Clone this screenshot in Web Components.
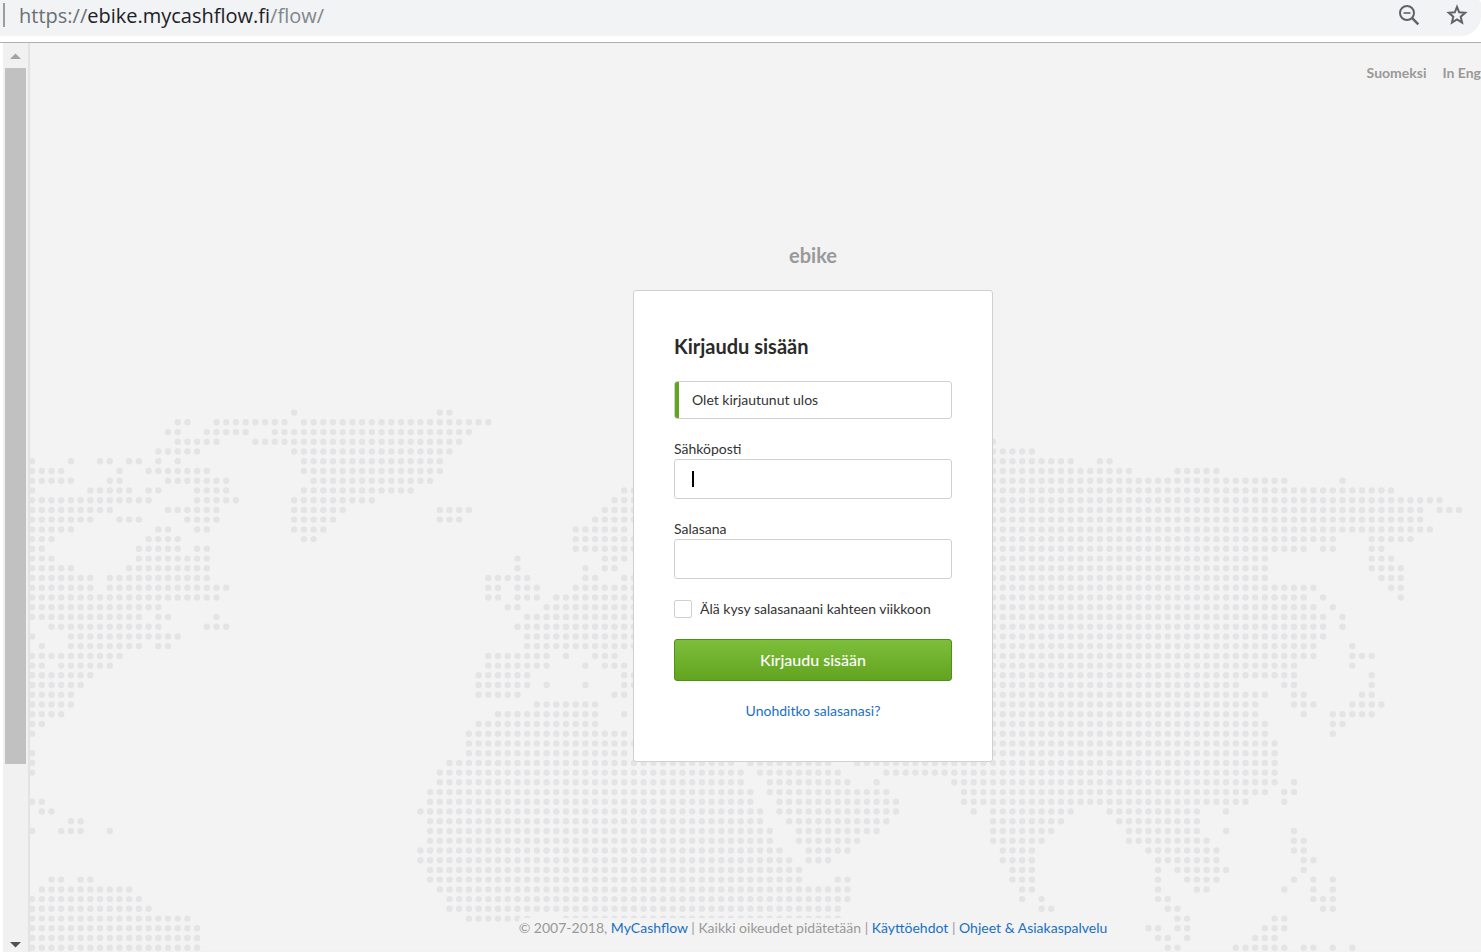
<!DOCTYPE html>
<html lang="fi">
<head>
<meta charset="utf-8">
<title>Kirjaudu sisään – MyCashflow</title>
<style>
  html, body { margin: 0; height: 100%; }
  body { background: #fff; font: 14px/20px Lato, "Liberation Sans", sans-serif; color: #333; overflow: hidden; }
</style>
</head>
<body>
<app-window></app-window>
<script>
class BaseElement extends HTMLElement {
  constructor() {
    super();
    this.attachShadow({ mode: "open" });
    this.shadowRoot.innerHTML = this.render();
  }
}

customElements.define("address-bar", class extends BaseElement {
  render() {
    return `<style>
      :host { display: block; background: #fff; padding-bottom: 6px; border-bottom: 1px solid #b0b0b0; }
      .pill { display: flex; align-items: center; height: 36px; box-sizing: border-box; padding: 0 12px 6px 3px;
              background: #f1f3f4; border-radius: 0 4px 20px 0; }
      .sep { width: 2px; height: 24px; background: #9b9da0; margin-right: 14px; }
      .url { flex: 1; padding-top: 2px; font: 20px/28px "Open Sans", "Noto Sans", sans-serif; color: #80868b; white-space: nowrap; }
      .scheme { color: #6b7075; }
      .host { color: #202124; }
      button { border: 0; background: none; padding: 0; margin-left: 24px; width: 24px; height: 24px; }
      svg { display: block; }
    </style>
    <div class="pill">
      <span class="sep"></span>
      <div class="url"><span class="scheme">https://</span><span class="host">ebike.mycashflow.fi</span>/flow/</div>
      <button type="button" aria-label="Zoom">
        <svg width="24" height="24" viewBox="0 0 24 24" fill="none" stroke="#5f6368" stroke-width="2">
          <circle cx="10" cy="10" r="7"/><path d="M15.200 15.200L21.300 21.300" stroke-width="2.500"/><path d="M6.500 10H13.500" stroke-width="1.600"/>
        </svg>
      </button>
      <button type="button" aria-label="Bookmark">
        <svg width="24" height="24" viewBox="0 0 24 24" fill="none" stroke="#5f6368" stroke-width="2">
          <path d="M12 3.900L14.200 9.300L20.200 9.800L15.700 13.700L17.100 19.700L12 16.500L6.900 19.700L8.300 13.700L3.800 9.800L9.800 9.300z"/>
        </svg>
      </button>
    </div>`;
  }
});

customElements.define("side-scrollbar", class extends BaseElement {
  render() {
    return `<style>
      :host { display: flex; flex-direction: column; align-items: center; box-sizing: border-box; width: 25px;
              margin-left: 3px; background: #f1f1f1; }
      .track { flex: 1; width: 21px; }
      .thumb { height: 81%; background: #c1c1c1; }
      svg { display: block; flex: none; }
    </style>
    <svg width="25" height="25" viewBox="0 0 25 25"><path d="M7 16L12.500 10.500L18 16z" fill="#a3a3a3"/></svg>
    <div class="track"><div class="thumb"></div></div>
    <svg width="25" height="25" viewBox="0 0 25 25"><path d="M7 15L12.500 20.500L18 15z" fill="#505050"/></svg>`;
  }
});

/* Dotted world map: one entry per grid row, listing the filled columns as ranges. */
const MAP_ROWS = [
  "27 42-43", "15-16 19-26 28-47", "14-15 18-22 25-45", "15-19 23-44 99", "13-17 27-43 99-103",
  "0 4 7-8 10-11 13 15 28-42 99-107 110-111", "0-3 9 12-18 28-42 99-113 118-122",
  "0-4 8-9 14-20 29-41 99-129 135", "0 6-10 12-13 17-20 28-39 61-140", "0-12 17-21 27-35 60-145",
  "0-8 14-19 27-32 42-45 59-143 145-147", "0-6 9-11 16-19 27-31 42-44 58-143",
  "0-4 13-14 17-18 27-30 56-61 99-144", "0-2 12-15 28-29 56-134 138-142",
  "0-1 11-15 17-18 56-131 133-134 138-139", "0-2 11-18 50 59-61 99-127 138-140",
  "0-4 10-18 50 57 59-60 99-127 138-141", "0-6 8-18 47-51 57-58 61-127 139-141",
  "0-6 8-20 47-48 50-52 56-132 140-141", "0-19 47-48 50-52 54-131 133 141",
  "0-13 49-50 53-132 134", "0-11 13-14 19 51-133 135", "2-13 18-20 50-133 135",
  "0 4-15 51-133", "1 4-11 13-14 51-132 136", "0-9 47-53 55 58-60 99-132 136-138",
  "0-1 3-8 47-53 57 59-61 99-130 136", "0-6 46-51 61-130 138", "0-5 46-51 53 57 61-124 129-130 138",
  "0-4 46-50 60-61 99-127 130-131 137-138", "0-4 52-58 99-126 130-132 136-139",
  "0-3 48-58 61 99-126 131 134-138", "0-1 46-58 99-127 134-135", "0 45-61 99-127 134",
  "45-128", "0 45-61 99-128", "0 43-72 74-82 85-128", "0 42-73 75-83 88-128",
  "42-73 76-84 87 95-128 130", "41-74 76-88 96-127 129-130", "0-1 41-74 77-89 96-125 129",
  "1-2 40-75 77-89 97 99-107 111-120 123", "4-5 41-75 78-88 99-106 112-120",
  "0 3-5 8 41-76 79-87 99-105 113-120 123 130", "41-76 79-85 99-104 113-121 130-131",
  "40-77 80-84 100-103 115-122 130-131", "40-78 80-82 100-103 116-122 131-132",
  "41-79 101-103 116 118-123 131", "2-3 5-6 41-79 83-84 101-103 116 119-122 130 132 134",
  "1-10 42-84 102-103 116 120-121 129 132 134", "0-11 43-84 102 104 116-117 132-134",
  "0-12 43-83 104-105 117-118 133-134", "0-16 45-51 55-83 118-119 128-129",
  "0-17 115-116 118-119 127-129", "0-17 116-117 119 126-128", "0-17 117-118 124-129 131-132 134 136"
];

customElements.define("dot-map", class extends BaseElement {
  render() {
    let d = "";
    MAP_ROWS.forEach((row, r) => {
      for (const range of row.split(" ")) {
        const [a, b = a] = range.split("-").map(Number);
        for (let c = a; c <= b; c++) d += `M${(4.1 + c * 9.707).toFixed(1)} ${(369.6 + r * 9.73).toFixed(1)}h0`;
      }
    });
    return `<style>
      :host { display: block; }
      svg { display: block; width: 100%; }
    </style>
    <svg viewBox="0 0 1453 909" aria-hidden="true"><path d="${d}" stroke="#e4e4e6" stroke-width="6.4" stroke-linecap="round"/></svg>`;
  }
});

customElements.define("language-nav", class extends BaseElement {
  render() {
    return `<style>
      :host { display: block; }
      nav { display: flex; justify-content: flex-end; gap: 16px; padding: 20px 117px 0 0; }
      a { color: #999; font-weight: 700; text-decoration: none; white-space: nowrap; }
    </style>
    <nav><a href="#fi">Suomeksi</a><a href="#en">In Eng</a></nav>`;
  }
});

customElements.define("status-message", class extends BaseElement {
  render() {
    return `<style>
      :host { display: block; box-sizing: border-box; height: 38px; border: 1px solid #d0d0d0; border-radius: 3px;
              overflow: hidden; margin-bottom: 20px; }
      p { margin: 0; border-left: 4px solid #62a420; padding: 8px 13px; }
    </style>
    <p role="status"><slot></slot></p>`;
  }
});

customElements.define("text-field", class extends HTMLElement {
  connectedCallback() {
    const type = this.getAttribute("type") || "text";
    this.attachShadow({ mode: "open" }).innerHTML = `<style>
      :host { display: block; margin-bottom: 20px; }
      label { display: block; }
      .box { position: relative; }
      input { display: block; box-sizing: border-box; width: 100%; height: 40px; border: 1px solid #d0d0d0;
              border-radius: 3px; padding: 0 17px; font: inherit; color: inherit; background: #fff; outline: none; }
      .caret { position: absolute; left: 18px; top: 12px; width: 2px; height: 16px; background: #000; }
    </style>
    <label for="field">${this.getAttribute("label")}</label>
    <div class="box"><input id="field" type="${type}">${this.hasAttribute("active") ? '<span class="caret"></span>' : ""}</div>`;
  }
});

customElements.define("check-field", class extends BaseElement {
  render() {
    return `<style>
      :host { display: block; margin-bottom: 20px; }
      label { display: flex; align-items: center; gap: 8px; white-space: nowrap; }
      input { appearance: none; flex: none; box-sizing: border-box; width: 18px; height: 18px; margin: 0;
              border: 1px solid #d0d0d0; border-radius: 2px; background: #fff; }
    </style>
    <label><input type="checkbox"><slot></slot></label>`;
  }
});

customElements.define("submit-button", class extends BaseElement {
  render() {
    return `<style>
      :host { display: block; margin-bottom: 20px; }
      button { display: block; width: 100%; height: 42px; padding: 0; border: 1px solid #4f9018; border-radius: 3px;
               background: linear-gradient(#7dbf3b, #62a420); color: #fff; font: 16px/20px Lato, sans-serif; font-weight: 500; }
    </style>
    <button type="submit"><slot></slot></button>`;
  }
});

customElements.define("login-card", class extends BaseElement {
  render() {
    return `<style>
      :host { display: block; box-sizing: border-box; width: 360px; max-width: 100%; padding: 40px; background: #fff;
              border: 1px solid #d0d0d0; border-radius: 3px; }
      h1 { margin: 0 0 20px; font-size: 20px; line-height: 30px; font-weight: 700; color: #2a2a2a; }
      .forgot { margin: 0; text-align: center; }
      a { color: #1a70c4; text-decoration: none; }
    </style>
    <form>
      <h1>Kirjaudu sisään</h1>
      <status-message>Olet kirjautunut ulos</status-message>
      <text-field label="Sähköposti" type="email" active></text-field>
      <text-field label="Salasana" type="password"></text-field>
      <check-field>Älä kysy salasanaani kahteen viikkoon</check-field>
      <submit-button>Kirjaudu sisään</submit-button>
      <p class="forgot"><a href="#forgot">Unohditko salasanasi?</a></p>
    </form>`;
  }
});

customElements.define("page-footer", class extends BaseElement {
  render() {
    return `<style>
      :host { display: block; background: #f3f3f3; color: #999; white-space: nowrap; }
      a { color: #1a70c4; text-decoration: none; }
    </style>
    © 2007-2018, <a href="#home">MyCashflow</a> | Kaikki oikeudet pidätetään | <a href="#terms">Käyttöehdot</a> | <a href="#help">Ohjeet &amp; Asiakaspalvelu</a>`;
  }
});

customElements.define("login-page", class extends BaseElement {
  render() {
    return `<style>
      :host { display: block; position: relative; overflow: hidden; background: #f3f3f3;
              box-shadow: inset 2px 0 1px #e2e2e2; }
      dot-map { position: absolute; left: 0; right: 0; top: 0; }
      /* The document is wider than the visible viewport and runs off its right edge. */
      .doc { position: relative; display: flex; flex-direction: column; align-items: center; box-sizing: border-box;
             min-height: 100%; margin-right: -117px; padding-bottom: 14px; }
      language-nav { align-self: stretch; }
      h2 { margin: 157px 0 20px; font-size: 20px; line-height: 30px; font-weight: 700; color: #999; }
      page-footer { margin-top: auto; }
    </style>
    <dot-map></dot-map>
    <div class="doc">
      <language-nav></language-nav>
      <h2>ebike</h2>
      <login-card></login-card>
      <page-footer></page-footer>
    </div>`;
  }
});

customElements.define("app-window", class extends BaseElement {
  render() {
    return `<style>
      :host { display: flex; flex-direction: column; height: 100vh; }
      .view { flex: 1; display: flex; min-height: 0; }
      side-scrollbar { flex: none; }
      login-page { flex: 1; min-width: 0; }
    </style>
    <address-bar></address-bar>
    <div class="view"><side-scrollbar></side-scrollbar><login-page></login-page></div>`;
  }
});
</script>
</body>
</html>
